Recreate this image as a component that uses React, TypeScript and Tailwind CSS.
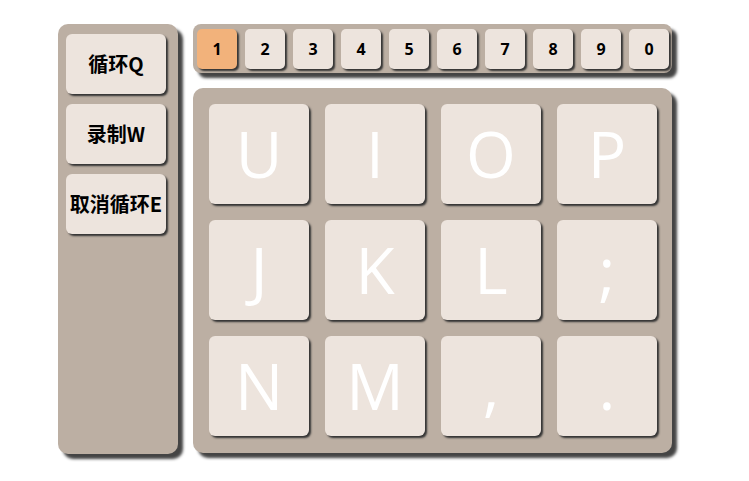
import React from "react";

const nums = ["1", "2", "3", "4", "5", "6", "7", "8", "9", "0"];
const keys = ["U", "I", "O", "P", "J", "K", "L", ";", "N", "M", ",", "."];
const side = ["循环Q", "录制W", "取消循环E"];

export default function App() {
  return (
    <div className="w-[749px] h-[481px] bg-white flex pt-[24px] pl-[58px] gap-[15px]" style={{ fontFamily: '"Open Sans", "Noto Sans CJK SC", sans-serif' }}>
      <div className="w-[120px] h-[430px] bg-[#bcafa3] rounded-[10px] shadow-[5px_5px_3px_#444] flex flex-col items-start pl-[8px] pt-[10px] gap-[10px]">
        {side.map((s) => (
          <div
            key={s}
            className="w-[100px] h-[60px] bg-[#ede4dd] rounded-[6px] shadow-[2px_2px_2px_#333] flex items-center justify-center font-bold text-[20px] text-black whitespace-nowrap"
            style={{ fontFamily: '"Noto Sans CJK SC", "Open Sans", sans-serif' }}
          >
            {s}
          </div>
        ))}
      </div>
      <div className="flex flex-col gap-[15px]">
        <div className="w-[479px] h-[49px] bg-[#bcafa3] rounded-[8px] shadow-[5px_5px_3px_#444] flex items-center pl-[4px] gap-[8px]">
          {nums.map((n, i) => (
            <div
              key={n}
              className={`w-[40px] h-[40px] rounded-[5px] shadow-[2px_2px_2px_#333] flex items-center justify-center font-bold text-[16px] text-black ${i === 0 ? "bg-[#f2b27b]" : "bg-[#ede4dd]"}`}
            >
              {n}
            </div>
          ))}
        </div>
        <div className="w-[479px] h-[365px] bg-[#bcafa3] rounded-[10px] shadow-[5px_5px_3px_#444] p-[16px] grid grid-cols-[repeat(4,100px)] grid-rows-[repeat(3,100px)] gap-[16px]">
          {keys.map((k) => (
            <div
              key={k}
              className="w-[100px] h-[100px] bg-[#ede4dd] rounded-[6px] shadow-[2px_2px_2px_#333] flex items-center justify-center text-white text-[64px] leading-none"
            >
              {k}
            </div>
          ))}
        </div>
      </div>
    </div>
  );
}
